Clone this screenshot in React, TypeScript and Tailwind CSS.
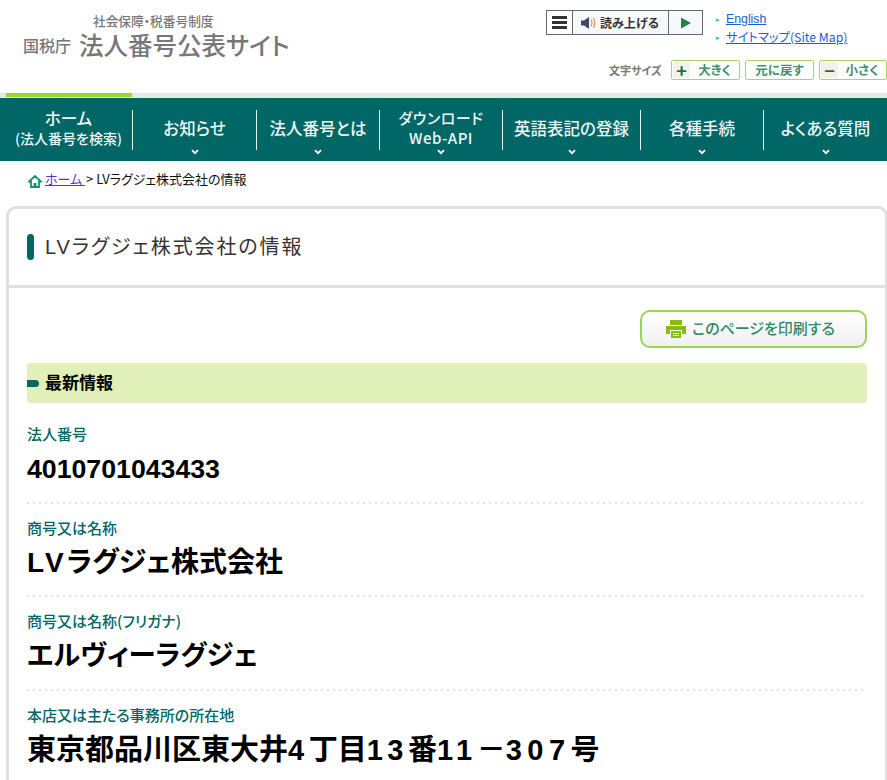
const jp = { fontFamily: '"Noto Sans CJK JP", "Liberation Sans", sans-serif' };
const lat = { fontFamily: '"Liberation Sans", "Noto Sans CJK JP", sans-serif' };

function Chevron() {
  return (
    <svg width="8" height="6" viewBox="0 0 8 6" className="block">
      <path d="M1 1.2 L4 4.2 L7 1.2" fill="none" stroke="#fff" strokeWidth="1.8" />
    </svg>
  );
}

const nav = [
  { w: "w-[133px]", lines: ["ホーム", "(法人番号を検索)"], chev: false, small: true },
  { w: "w-[124px]", lines: ["お知らせ"], chev: true },
  { w: "w-[123px]", lines: ["法人番号とは"], chev: true },
  { w: "w-[123px]", lines: ["ダウンロード", "Web-API"], chev: true, two: true },
  { w: "w-[138px]", lines: ["英語表記の登録"], chev: true },
  { w: "w-[123px]", lines: ["各種手続"], chev: true },
  { w: "w-[123px]", lines: ["よくある質問"], chev: true },
];

function SizeButton({ icon, label, w }: { icon?: string; label: string; w: string }) {
  return (
    <div className={`${w} h-[20px] flex items-center border border-[#a5d66a] rounded-[2px] bg-white text-[#3f8f70] text-[12.5px] font-bold`}>
      {icon && <span className="w-[17px] h-[16px] ml-[1px] bg-[#f2f2ea] flex items-center justify-center text-[#17704f] text-[18px] font-bold leading-none">{icon}</span>}
      <span className="flex-1 text-center leading-none">{label}</span>
    </div>
  );
}

function Dots() {
  return <div className="absolute left-0 right-0 bottom-0 h-[2px] bg-[linear-gradient(to_right,#e2e2e2_2px,transparent_2px)] bg-[length:6px_2px]" />;
}

function Label({ children }: { children: string }) {
  return <div className="text-[15px] font-medium text-[#006666] leading-[19px]">{children}</div>;
}

export default function App() {
  return (
    <div className="w-[887px] h-[780px] overflow-hidden bg-white text-black [font-feature-settings:'palt']" style={jp}>
      <header className="h-[93px] flex justify-between">
        <div className="pl-[23px] pt-[14px]">
          <div className="pl-[70px] text-[12.7px] leading-[14px] font-medium text-[#777] [font-feature-settings:'normal'] whitespace-nowrap">社会保障・税番号制度</div>
          <div className="flex items-center h-[34px] [font-feature-settings:'normal']">
            <span className="text-[16px] font-medium text-[#777] w-[56px] leading-none">国税庁</span>
            <span className="text-[24.5px] font-medium text-[#777] leading-none whitespace-nowrap">法人番号公表サイト</span>
          </div>
        </div>
        <div className="w-[341px] pt-[10px]">
          <div className="flex">
            <div className="flex h-[25px] w-[157px] border border-[#5f6a78] bg-[#f5f9fc]">
              <div className="w-[26px] border-r border-[#5f6a78] flex flex-col justify-center gap-[2px] px-[5px] bg-white">
                <span className="h-[3px] bg-[#333]" />
                <span className="h-[3px] bg-[#333]" />
                <span className="h-[3px] bg-[#333]" />
              </div>
              <div className="w-[96px] border-r border-[#5f6a78] flex items-center pl-[8px] gap-[3px]">
                <svg width="16" height="14" viewBox="0 0 16 14" className="shrink-0">
                  <path d="M0 4.5H3L8 1V13L3 9.5H0Z" fill="#45456b" />
                  <path d="M10 3.5Q12 7 10 10.5M12.5 2Q15 7 12.5 12" fill="none" stroke="#ee9a60" strokeWidth="1.3" />
                </svg>
                <span className="text-[12px] font-bold text-[#333] whitespace-nowrap leading-none">読み上げる</span>
              </div>
              <div className="flex-1 flex items-center justify-center">
                <svg width="10" height="12" viewBox="0 0 10 12"><path d="M0 0.5L10 6L0 11.5Z" fill="#2b7f4a" /></svg>
              </div>
            </div>
            <div className="ml-[13px] text-[12.3px] leading-[18px] text-[#1a5ed1]">
              <div className="flex items-center gap-[6px]">
                <span className="text-[#22c0a0] text-[7px] leading-none">▸</span>
                <span className="underline" style={{ fontFamily: '"Liberation Sans", sans-serif' }}>English</span>
              </div>
              <div className="flex items-center gap-[6px]">
                <span className="text-[#22c0a0] text-[7px] leading-none">▸</span>
                <span className="underline whitespace-nowrap">サイトマップ(Site Map)</span>
              </div>
            </div>
          </div>
          <div className="flex items-center mt-[14px] ml-[63px]">
            <span className="w-[62px] text-[11px] font-bold text-[#777] whitespace-nowrap [font-feature-settings:'normal']">文字サイズ</span>
            <div className="flex gap-[5px]">
              <SizeButton icon="+" label="大きく" w="w-[69px]" />
              <SizeButton label="元に戻す" w="w-[69px]" />
              <SizeButton icon="−" label="小さく" w="w-[68px]" />
            </div>
          </div>
        </div>
      </header>

      <div className="h-[5px] bg-[#e9e9e3]">
        <div className="ml-[6px] w-[126px] h-[4px] bg-[#a0d232]" />
      </div>

      <nav className="h-[63px] bg-[#006666] flex pt-[12px] text-[#eef6f5]">
        {nav.map((n, i) => (
          <div key={i} className={`${n.w} shrink-0 h-[40px] relative flex flex-col items-center justify-center text-center font-medium ${i === 0 ? "pl-[5px]" : ""} ${i < 6 ? "border-r border-[#dfe]" : ""}`}>
            {n.lines.map((l, j) => (
              <div key={j} className={`-translate-y-[2px] whitespace-nowrap leading-[20px] ${n.small && j === 1 ? "text-[14px]" : n.two ? "text-[15px] tracking-[0.5px]" : "text-[16.5px]"}`}>{l}</div>
            ))}
            {n.chev && <div className="absolute left-1/2 -translate-x-1/2 top-[39px]"><Chevron /></div>}
          </div>
        ))}
      </nav>

      <div className="h-[45px] pl-[28px] pt-[8px] flex items-start text-[13px] leading-[19px] text-[#111]">
        <svg width="14" height="13" viewBox="0 0 14 13" className="mr-[3px] mt-[6px]">
          <path d="M7 1L1 6.5H3V12H11V6.5H13Z" fill="none" stroke="#0a9a68" strokeWidth="1.8" />
          <rect x="5.5" y="8" width="3" height="4" fill="#0a9a68" />
        </svg>
        <span className="underline text-[#5b2fd0] whitespace-pre">ホーム </span>
        <span className="ml-[1px] whitespace-pre">{"> LVラグジェ株式会社の情報"}</span>
      </div>

      <main className="ml-[6px] w-[882px] h-[600px] border-[3px] border-b-0 border-[#e0e0e0] rounded-t-[10px]">
        <div className="h-[79px] border-b-[3px] border-[#e0e0e0] pl-[18px] flex items-center">
          <span className="w-[7px] h-[26px] rounded-[4px] bg-[#006666]" />
          <h1 className="ml-[11px] text-[20px] tracking-[1.9px] text-[#333] leading-none font-normal [font-feature-settings:'normal']" style={lat}>LVラグジェ株式会社の情報</h1>
        </div>
        <div className="pl-[18px] w-[858px]">
          <div className="flex justify-end pt-[22px] w-[840px]">
            <div className="w-[227px] h-[38px] border-2 border-[#9bd35a] rounded-[10px] bg-gradient-to-b from-white to-[#f0f0f0] flex items-center justify-center gap-[6px] pr-[6px]">
              <svg width="20" height="18" viewBox="0 0 20 18">
                <path d="M4 0H16V5H4Z M0 6H20V14H16V10H4V14H0Z M5 11H15V18H5Z M7 13V14H13V13Z M7 15V16H13V15Z" fill="#86bd12" fillRule="evenodd" />
              </svg>
              <span className="-translate-y-[2px] text-[15px] font-medium text-[#2f8a68] leading-none">このページを印刷する</span>
            </div>
          </div>
          <div className="mt-[15px] h-[40px] w-[840px] bg-[#e0f0b8] rounded-[4px] flex items-center">
            <span className="w-[12px] h-[7px] bg-[#006666] rounded-r-[4px]" />
            <h2 className="-translate-y-[2px] ml-[6px] text-[17px] font-bold leading-none">最新情報</h2>
          </div>
          <div className="pt-[7px] w-[840px]">
            <div className="h-[94px] relative pt-[14px]">
              <Label>法人番号</Label>
              <div className="text-[26.7px] font-bold leading-[32px] mt-[10px] whitespace-nowrap" style={lat}>4010701043433</div>
              <Dots />
            </div>
            <div className="h-[93px] relative pt-[14px]">
              <Label>商号又は名称</Label>
              <div className="text-[28px] font-bold leading-[32px] mt-[10px] whitespace-nowrap" style={lat}><span className="tracking-[3px]">LV</span>ラグジェ株式会社</div>
              <Dots />
            </div>
            <div className="h-[94px] relative pt-[14px]">
              <Label>商号又は名称(フリガナ)</Label>
              <div className="text-[27.5px] font-bold leading-[32px] mt-[10px] whitespace-nowrap" style={lat}>エルヴィーラグジェ</div>
              <Dots />
            </div>
            <div className="pt-[14px]">
              <Label>本店又は主たる事務所の所在地</Label>
              <div className="text-[29px] font-bold leading-[32px] mt-[10px] whitespace-nowrap" style={lat}>東京都品川区東大井<span className="tracking-[4.5px]">4</span>丁目<span className="tracking-[4.5px]">13</span>番<span className="tracking-[4.5px]">11</span>－<span className="tracking-[5.5px]">307</span>号</div>
            </div>
          </div>
        </div>
      </main>
    </div>
  );
}
